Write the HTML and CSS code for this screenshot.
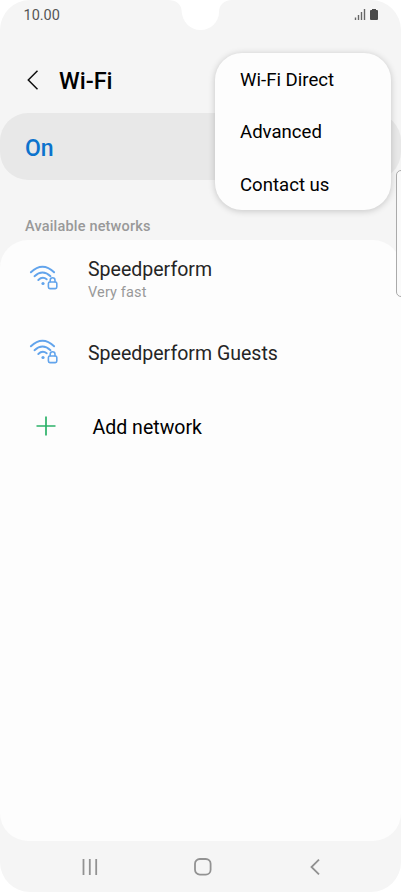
FILE: index.html
```
<!DOCTYPE html>
<html lang="en">
<head>
<meta charset="utf-8">
<title>Wi-Fi</title>
<link rel="stylesheet" href="styles.css">
</head>
<body>
<main class="phone">
  <svg class="notch" width="64" height="31" viewBox="0 0 64 31"><path d="M0 0C8 0 13 4 13.500 10C14 22 22 30 32.500 30S51 22 51 12C51 5 56 0 64 0Z" fill="#fff"/></svg>
  <header class="status">
    <span>10.00</span>
    <svg width="26" height="13" viewBox="0 0 26 13"><path d="M1.500 9.500V12M4.500 7V12M7.500 4V12M10.500 1V12" stroke="#666" stroke-width="1.400" fill="none"/><path d="M18 1h4v1h1q1 0 1 1v8q0 1-1 1h-6q-1 0-1-1V3q0-1 1-1h1z" fill="#4a4a4a"/></svg>
  </header>
  <div class="title">
    <svg width="12" height="20" viewBox="0 0 12 20"><path d="M10.500 .8 1.300 10l9.200 9.200" fill="none" stroke="#111" stroke-width="1.500"/></svg>
    <h1>Wi-Fi</h1>
  </div>
  <section class="toggle">On</section>
  <h2>Available networks</h2>
  <section class="networks">
    <div class="network first">
      <svg class="wifi" width="30" height="26" viewBox="0 0 30 26"><use href="#wifi-lock"/></svg>
      <div><div class="name">Speedperform</div><div class="speed">Very fast</div></div>
    </div>
    <div class="network second">
      <svg class="wifi" width="30" height="26" viewBox="0 0 30 26"><use href="#wifi-lock"/></svg>
      <div class="name guest">Speedperform Guests</div>
    </div>
    <div class="network add">
      <svg width="20" height="20" viewBox="0 0 20 20"><path d="M10 .5v19M.5 10h19" stroke="#2bb168" stroke-width="1.700"/></svg>
      <span>Add network</span>
    </div>
  </section>
  <nav>
    <svg width="16" height="16" viewBox="0 0 16 16"><path d="M1.500 0v16M7.800 0v16M14.200 0v16"/></svg>
    <svg class="home" width="18" height="18" viewBox="0 0 18 18"><rect x="1" y="1" width="15.600" height="15.600" rx="4.800"/></svg>
    <svg width="10" height="16" viewBox="0 0 10 16"><path d="M9 .6 1.500 8 9 15.400"/></svg>
  </nav>
  <div class="menu"><span>Wi-Fi Direct</span><span>Advanced</span><span>Contact us</span></div>
  <div class="edge"></div>
</main>
<svg width="0" height="0" class="defs"><defs><g id="wifi-lock" fill="none" stroke="#62a4ec" stroke-width="1.900" stroke-linecap="round">
  <path d="M1.900 7.300Q13.500-3.700 25.100 7.300"/><path d="M5.500 11.200Q13.500 3.600 21.500 11.200"/><path d="M9.300 15Q13.500 11 17.700 14.300"/>
  <circle cx="14" cy="18.500" r="1.600" fill="#62a4ec" stroke="none"/>
  <rect x="19.400" y="17" width="8.400" height="6.600" rx="1.500" stroke-width="1.600"/><path d="M21.200 16.800v-1.600a2.400 2.400 0 0 1 4.800 0v1.600" stroke-width="1.600"/>
</g></defs></svg>
</body>
</html>
```
FILE: styles.css
```
* { box-sizing: border-box; }
body { margin: 0; background: #fff; font-family: Roboto, sans-serif; }
svg { display: block; flex: none; }
.defs { position: absolute; }
.phone { position: relative; display: flex; flex-direction: column; width: 401px; height: 892px; overflow: hidden; border-radius: 30px; background: #f5f5f5; }
.notch { position: absolute; left: 168px; top: 0; }
.status { display: flex; justify-content: space-between; align-items: center; height: 49px; padding: 0 21px 20px 23.500px; color: #555; font-size: 14.500px; }
.status span { padding-top: 1px; }
.title { display: flex; align-items: center; height: 64px; padding: 0 26px 2px 27px; gap: 20px; }
h1 { margin: 0; padding-top: 2px; font-size: 23.500px; font-weight: 500; line-height: 28px; color: #000; }
.toggle { height: 67px; padding-left: 25px; border-radius: 28px; background: #e8e8e8; color: #0c73cd; font-size: 23px; font-weight: 500; line-height: 71px; }
h2 { height: 60px; margin: 0; padding: 37px 25px 0; color: #999; font-size: 14.500px; letter-spacing: .18px; font-weight: 500; line-height: 20px; }
.networks { height: 601px; border-radius: 28px; background: #fdfdfd; }
.network { display: flex; align-items: flex-start; gap: 29px; padding-left: 29px; color: #252525; }
.wifi { margin-top: 25px; }
.first { height: 74px; }
.second { height: 75px; }
.name { padding-top: 17px; font-size: 19.550px; line-height: 26px; }
.guest { padding-top: 27px; }
.speed { color: #999; font-size: 14.500px; letter-spacing: .15px; line-height: 20px; }
.add { height: 74px; padding-left: 36px; gap: 36.500px; align-items: center; color: #000; font-size: 19.550px; }
.add span { padding-top: 2px; }
nav { display: flex; align-items: center; height: 51px; padding: 1px 81px 0 82px; justify-content: space-between; }
nav path, nav rect { fill: none; stroke: #929292; stroke-width: 1.800px; }
.home { margin: 0 2px 0 -1px; }
.menu { position: absolute; left: 215px; top: 52.500px; width: 175.500px; height: 157px; padding: 1px 0 0 25px; border-radius: 27px; background: #fdfdfd; box-shadow: 0 1px 7px #0003; color: #000; font-size: 18.600px; }
.menu span { display: block; height: 52.500px; line-height: 53px; }
.edge { position: absolute; left: 396px; top: 170px; width: 10px; height: 127px; border: 1px solid #aaa; border-radius: 5px; background: #fafafa; }
```
